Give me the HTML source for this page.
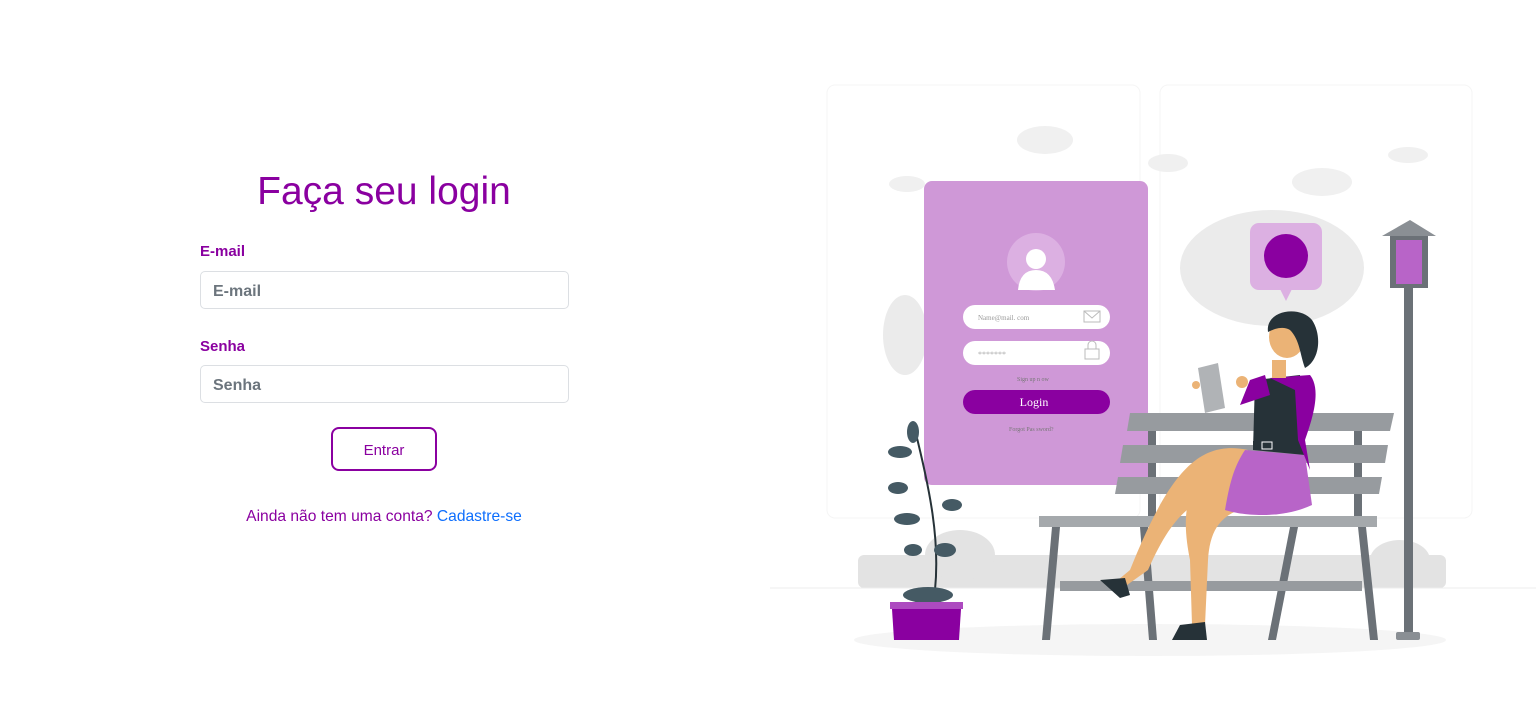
<!DOCTYPE html>
<html><head><meta charset="utf-8"><style>
*{box-sizing:border-box;margin:0;padding:0}
body{width:1536px;height:711px;background:#fff;font-family:"Liberation Sans",sans-serif;position:relative;overflow:hidden}
h1{position:absolute;left:200px;width:368px;top:170px;text-align:center;font-weight:normal;font-size:39px;color:#8a00a0}
.lbl{position:absolute;left:200px;font-weight:bold;font-size:15px;color:#8a00a0}
.inp{position:absolute;left:200px;width:369px;height:38px;border:1px solid #dcdfe3;border-radius:5px;padding-left:12px;line-height:40px;font-weight:bold;font-size:16px;color:#6c757d}
.btn{position:absolute;left:331px;top:427px;width:106px;height:44px;border:2px solid #8a00a0;border-radius:8px;text-align:center;line-height:44px;font-size:15px;color:#8a00a0}
.foot{position:absolute;left:190px;width:388px;top:508px;text-align:center;font-size:15.6px;color:#8a00a0}
.foot span{color:#0d6efd}
svg{position:absolute;left:0;top:0}
</style></head><body>
<h1>Faça seu login</h1>
<div class="lbl" style="top:243px">E-mail</div>
<div class="inp" style="top:271px">E-mail</div>
<div class="lbl" style="top:338px">Senha</div>
<div class="inp" style="top:365px">Senha</div>
<div class="btn">Entrar</div>
<div class="foot">Ainda não tem uma conta? <span>Cadastre-se</span></div>
<svg width="1536" height="711" viewBox="0 0 1536 711">
<rect x="827" y="85" width="313" height="433" rx="8" fill="#fff" stroke="#f5f5f5"/>
<rect x="1160" y="85" width="312" height="433" rx="8" fill="#fff" stroke="#f5f5f5"/>
<g fill="#f0f0f0">
<ellipse cx="1045" cy="140" rx="28" ry="14"/><ellipse cx="1168" cy="163" rx="20" ry="9"/><ellipse cx="1322" cy="182" rx="30" ry="14"/><ellipse cx="1408" cy="155" rx="20" ry="8"/><ellipse cx="907" cy="184" rx="18" ry="8"/>
</g>
<g fill="#ebebeb">
<ellipse cx="1272" cy="268" rx="92" ry="58"/><ellipse cx="905" cy="335" rx="22" ry="40"/>
</g>
<g fill="#e3e3e3">
<rect x="858" y="555" width="588" height="33" rx="6"/>
<ellipse cx="960" cy="555" rx="35" ry="25"/><ellipse cx="1400" cy="560" rx="30" ry="20"/>
</g>
<line x1="770" y1="588" x2="1536" y2="588" stroke="#eee"/>
<ellipse cx="1150" cy="640" rx="296" ry="16" fill="#f5f5f5"/>
<rect x="924" y="181" width="224" height="304" rx="8" fill="#cf98d7"/>
<circle cx="1036" cy="262" r="29" fill="#dcb0e2"/>
<circle cx="1036" cy="259" r="10" fill="#fff"/>
<path d="M1018 290 Q1020 270 1036 270 Q1052 270 1055 290 Z" fill="#fff"/>
<rect x="963" y="305" width="147" height="24" rx="12" fill="#fff"/>
<rect x="963" y="341" width="147" height="24" rx="12" fill="#fff"/>
<text x="978" y="320" font-family="Liberation Serif" font-size="7" fill="#999">Name@mail.   com</text>
<rect x="1084" y="311" width="16" height="11" fill="none" stroke="#bbb"/><path d="M1084 311 L1092 318 L1100 311" fill="none" stroke="#bbb"/>
<text x="978" y="357" font-family="Liberation Serif" font-size="8" fill="#aaa">*******</text>
<rect x="1085" y="349" width="14" height="10" fill="none" stroke="#bbb"/><path d="M1088 349 V345 a4 4 0 0 1 8 0 V349" fill="none" stroke="#bbb"/>
<text x="1017" y="381" font-family="Liberation Serif" font-size="6" fill="#777">Sign up n   ow</text>
<rect x="963" y="390" width="147" height="24" rx="12" fill="#8a00a0"/>
<text x="1034" y="406" text-anchor="middle" font-family="Liberation Serif" font-size="12" fill="#fff">Login</text>
<text x="1009" y="431" font-family="Liberation Serif" font-size="6" fill="#777">Forgot Pas    sword?</text>
<rect x="1250" y="223" width="72" height="67" rx="9" fill="#dcb0e2"/>
<path d="M1280 289 L1286 301 L1292 289Z" fill="#dcb0e2"/>
<circle cx="1286" cy="256" r="22" fill="#8a00a0"/>
<g fill="#6b7177">
<rect x="1404" y="285" width="9" height="350"/><rect x="1396" y="632" width="24" height="8" rx="2" fill="#8a8f94"/>
<path d="M1060 527 L1052 527 L1042 640 L1050 640Z"/><path d="M1140 527 L1148 527 L1157 640 L1149 640Z"/>
<path d="M1290 527 L1298 527 L1276 640 L1268 640Z"/><path d="M1358 527 L1366 527 L1378 640 L1370 640Z"/>
<rect x="1148" y="413" width="8" height="110"/><rect x="1354" y="413" width="8" height="110"/>
</g>
<path d="M1382 236 L1410 220 L1436 236Z" fill="#8a8f94"/>
<rect x="1390" y="236" width="38" height="52" fill="#6b7177"/><rect x="1396" y="240" width="26" height="44" fill="#b864c8"/>
<g fill="#979b9f">
<path d="M1130 413 H1394 L1390 431 H1127Z"/><path d="M1123 445 H1388 L1385 463 H1120Z"/><path d="M1118 477 H1382 L1379 494 H1115Z"/>
<rect x="1060" y="581" width="302" height="10"/>
</g>
<rect x="1039" y="516" width="338" height="11" fill="#a5a9ac"/>
<path d="M935 590 C940 540 930 490 915 430" stroke="#263238" stroke-width="2" fill="none"/>
<g fill="#455a64">
<ellipse cx="913" cy="432" rx="6" ry="11"/><ellipse cx="900" cy="452" rx="12" ry="6"/><ellipse cx="952" cy="505" rx="10" ry="6"/><ellipse cx="907" cy="519" rx="13" ry="6"/><ellipse cx="945" cy="550" rx="11" ry="7"/><ellipse cx="913" cy="550" rx="9" ry="6"/><ellipse cx="898" cy="488" rx="10" ry="6"/><ellipse cx="928" cy="595" rx="25" ry="8"/>
</g>
<rect x="890" y="602" width="73" height="7" fill="#ad4ac0"/><path d="M892 609 H961 L959 640 H894Z" fill="#8a00a0"/>
<g>
<path d="M1248 450 C1200 440 1170 470 1130 570 L1112 585 L1120 590 L1148 570 C1170 520 1190 500 1220 495Z" fill="#ebb376"/>
<path d="M1235 470 C1180 470 1182 520 1190 560 L1192 625 L1205 625 L1208 560 C1210 530 1220 510 1260 505Z" fill="#ebb376"/>
<path d="M1100 580 L1125 578 L1130 595 L1120 598Z" fill="#263238"/>
<path d="M1180 625 L1205 622 L1207 640 L1172 640Z" fill="#263238"/>
<path d="M1245 450 L1305 455 L1312 505 C1280 520 1240 515 1225 510 C1230 480 1235 465 1245 450Z" fill="#b864c8"/>
<path d="M1255 380 L1300 375 L1305 455 L1253 450Z" fill="#263238"/>
<rect x="1253" y="441" width="50" height="9" fill="#263238"/><rect x="1262" y="442" width="10" height="7" fill="none" stroke="#fff"/>
<path d="M1270 378 L1310 375 C1322 390 1312 420 1305 440 L1310 470 L1298 440 L1295 390Z" fill="#8a00a0"/>
<path d="M1250 380 L1265 375 L1270 395 L1240 405Z" fill="#8a00a0"/>
<rect x="1272" y="360" width="14" height="18" fill="#ebb376"/>
<ellipse cx="1287" cy="337" rx="18" ry="21" fill="#ebb376"/>
<path d="M1268 332 C1265 310 1300 305 1312 320 C1322 335 1320 360 1305 368 C1300 355 1300 340 1290 330 C1282 325 1272 330 1268 332Z" fill="#263238"/>
<path d="M1198 368 L1218 363 L1225 408 L1205 413Z" fill="#b0b3b6"/>
<circle cx="1196" cy="385" r="4" fill="#ebb376"/><circle cx="1242" cy="382" r="6" fill="#ebb376"/>
</g>
</svg>
</body></html>
